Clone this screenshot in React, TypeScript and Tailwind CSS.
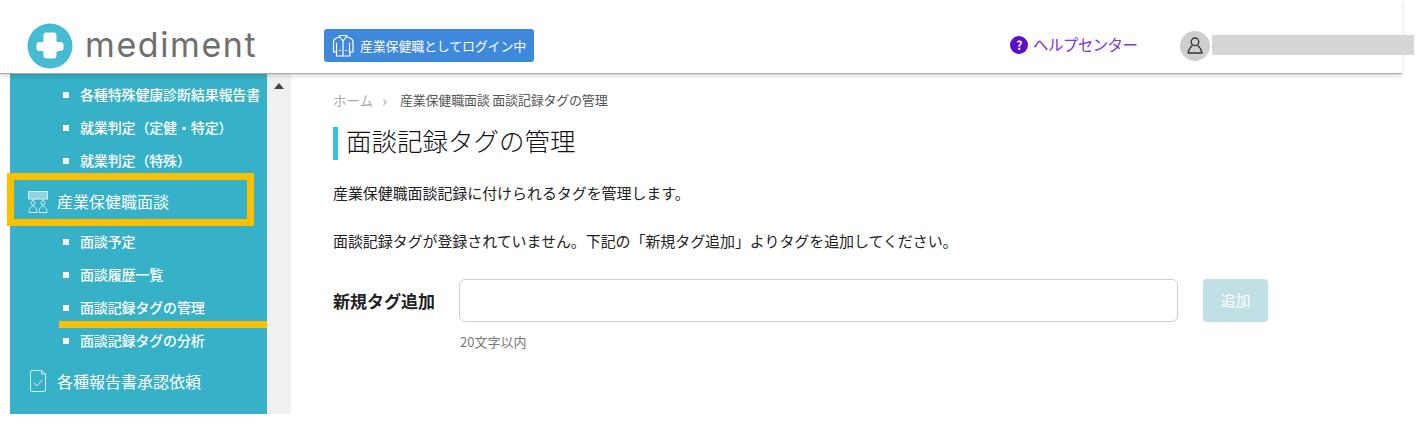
import React from "react";

function Logo() {
  return (
    <svg width="46" height="46" viewBox="0 0 46 46" className="shrink-0">
      <circle cx="23" cy="23" r="22.500" fill="#45bcd3" />
      <path d="M19.500 9.500h7a3 3 0 0 1 3 3v5a1.500 1.500 0 0 0 1.500 1.500h2.500a3 3 0 0 1 3 3v3a3 3 0 0 1-3 3H31a1.500 1.500 0 0 0-1.500 1.500v3a3 3 0 0 1-3 3h-7a3 3 0 0 1-3-3v-3a1.500 1.500 0 0 0-1.500-1.500h-2.500a3 3 0 0 1-3-3v-3a3 3 0 0 1 3-3H15a1.500 1.500 0 0 0 1.500-1.500v-5a3 3 0 0 1 3-3z" fill="#fff" />
    </svg>
  );
}

function CoatIcon() {
  return (
    <svg width="24" height="24" viewBox="0 0 24 24" fill="none" stroke="#fff" strokeWidth="1.200" strokeLinejoin="round" strokeLinecap="round" className="shrink-0">
      <path d="M8.500 1.500h7l1 1.500 3 1.200c1.500.6 2.500 2.300 2.500 4v9.800h-3v4H5.500v-4h-3V8.200c0-1.700 1-3.400 2.500-4l3-1.200z" />
      <path d="M8.500 2.500L12 7l3.500-4.500M12 7v15M5.500 9v9.500M18.500 9v9.500M8.500 16.500h1M14.500 16.500h1" />
    </svg>
  );
}

function UserIcon() {
  return (
    <svg width="16" height="17" viewBox="0 0 16 17" fill="none" stroke="#333" strokeWidth="1.300" strokeLinejoin="round">
      <circle cx="8" cy="4.800" r="3.800" />
      <path d="M5.300 8.500C3.300 10 1.700 12.700 1 16h14c-.7-3.300-2.300-6-4.300-7.500" />
    </svg>
  );
}

function MeetingIcon() {
  return (
    <svg width="20" height="22" viewBox="0 0 20 22" fill="none" stroke="#d5eef3" strokeWidth="1" className="mt-[2px] shrink-0">
      <rect x="0.500" y="0.500" width="19" height="7.500" fill="#8fd3e0" />
      <path d="M5 8v2M15 8v2" />
      <circle cx="5" cy="12" r="2" />
      <circle cx="15" cy="12" r="2" />
      <path d="M1 21.500c0-3 1.500-6.500 4-6.500s4 3.500 4 6.500zM11 21.500c0-3 1.500-6.500 4-6.500s4 3.500 4 6.500z" />
    </svg>
  );
}

function ReportIcon() {
  return (
    <svg width="16" height="22" viewBox="0 0 16 22" fill="none" stroke="#d5eef3" strokeWidth="1" strokeLinejoin="round" strokeLinecap="round" className="shrink-0">
      <path d="M2 .500h9.500v3.500h4v16a1.500 1.500 0 0 1-1.500 1.500H2A1.500 1.500 0 0 1 .500 20V2A1.500 1.500 0 0 1 2 .500zM11.500 .500l4 3.500" />
      <path d="M4 13l3 3 5-6" />
    </svg>
  );
}

function SubItem({ label }: { label: string }) {
  return (
    <div className="flex h-[33px] items-center pl-[53px] text-[14px] font-medium tracking-[-0.15px] text-white">
      <span className="mr-[11px] h-[6px] w-[6px] shrink-0 bg-white" />
      <span className="whitespace-nowrap">{label}</span>
    </div>
  );
}

function TopItem({ label, icon }: { label: string; icon: React.ReactNode }) {
  return (
    <div className="flex h-[48px] items-center text-[16px] text-white">
      <span className="flex w-[47px] shrink-0 justify-center pl-[9px]">{icon}</span>
      <span className="pb-[1px] whitespace-nowrap">{label}</span>
    </div>
  );
}

export default function App() {
  return (
    <div
      className="relative h-[425px] w-[1425px] overflow-hidden bg-white text-[#222]"
      style={{ fontFamily: '"Noto Sans CJK JP", "Noto Sans", sans-serif' }}
    >
      <header className="relative z-10 flex h-[74px] w-[1402px] items-center border-b border-[#aaa] bg-white pt-[18px] shadow-[0_2px_4px_rgba(0,0,0,0.15)]">
        <div className="ml-[27px] flex w-[297px] shrink-0 items-center gap-[12px]">
          <Logo />
          <span className="mt-[-2px] text-[34px] leading-none font-normal tracking-[1.600px] text-[#6f6f6f]" style={{ fontFamily: '"Inter", sans-serif' }}>
            mediment
          </span>
        </div>
        <div className="flex h-[33px] w-[210px] shrink-0 items-center gap-[5px] rounded-[3px] bg-[#3f89dc] pl-[7px] text-[13px] whitespace-nowrap text-white">
          <CoatIcon />
          <span className="tracking-[-0.2px]">産業保健職としてログイン中</span>
        </div>
        <div className="mt-[-2px] ml-[476px] flex w-[170px] shrink-0 items-center gap-[5px] text-[15.500px] tracking-[-0.6px] text-[#7a35e0]">
          <span className="flex h-[18px] w-[18px] items-center justify-center rounded-full bg-[#5a0fc8] text-[12px] font-bold text-white">?</span>
          <span className="whitespace-nowrap">ヘルプセンター</span>
        </div>
        <div className="flex h-[30px] w-[30px] shrink-0 items-center justify-center rounded-full bg-[#cfcfcf]">
          <UserIcon />
        </div>
        <div className="mt-[-2px] mr-[-12px] ml-[2px] h-[20px] w-[202px] shrink-0 bg-[#d6d6d6]" />
      </header>

      <div className="flex h-[340px] w-full">
        <aside className="ml-[10px] flex h-full w-[281px] shrink-0">
          <nav className="relative h-full w-[257px] overflow-hidden bg-[#36b1c7] pt-[4px]">
            <SubItem label="各種特殊健康診断結果報告書" />
            <SubItem label="就業判定（定健・特定）" />
            <SubItem label="就業判定（特殊）" />
            <TopItem label="産業保健職面談" icon={<MeetingIcon />} />
            <SubItem label="面談予定" />
            <SubItem label="面談履歴一覧" />
            <SubItem label="面談記録タグの管理" />
            <SubItem label="面談記録タグの分析" />
            <TopItem label="各種報告書承認依頼" icon={<ReportIcon />} />
          </nav>
          <div className="flex h-full w-[24px] justify-center bg-[#f0f0f0] pt-[9px]">
            <span className="h-0 w-0 border-x-[5.500px] border-b-[6px] border-x-transparent border-b-[#444]" />
          </div>
        </aside>

        <main className="flex-1 pl-[42px]">
          <div className="mt-[17px] flex h-[18px] items-center text-[13px] whitespace-nowrap text-[#555]">
            <span className="text-[13.500px] text-[#aaa]">ホーム</span>
            <span className="mr-[13px] ml-[9px] text-[16px] leading-none text-[#aaa]">›</span>
            <span className="tracking-[-0.2px]">産業保健職面談 面談記録タグの管理</span>
          </div>
          <h1 className="mt-[18px] flex h-[33px] items-center border-l-[5px] border-[#36c0dc] pb-[6px] pl-[8px] text-[25.500px] font-light text-[#111]">
            面談記録タグの管理
          </h1>
          <p className="mt-[23px] text-[15px] leading-[20px] tracking-[-0.08px]">産業保健職面談記録に付けられるタグを管理します。</p>
          <p className="mt-[28px] text-[15px] leading-[20px] tracking-[-0.08px]">面談記録タグが登録されていません。下記の「新規タグ追加」よりタグを追加してください。</p>
          <div className="mt-[28px] flex items-center">
            <label className="w-[126px] text-[17px] font-bold">新規タグ追加</label>
            <input className="h-[43px] w-[719px] rounded-[6px] border border-[#cfcfcf] bg-white" />
            <button className="ml-[25px] h-[43px] w-[65px] rounded-[4px] bg-[#c1e0e6] text-[15px] text-white">追加</button>
          </div>
          <p className="mt-[11px] ml-[127px] text-[13px] leading-[18px] text-[#777]">20文字以内</p>
        </main>
      </div>

      <div className="pointer-events-none absolute top-[173px] left-[7px] h-[53px] w-[247px] border-[7px] border-[#fdc000]" />
      <div className="pointer-events-none absolute top-[321px] left-[59px] h-[7px] w-[208px] bg-[#fdc000]" />
    </div>
  );
}
